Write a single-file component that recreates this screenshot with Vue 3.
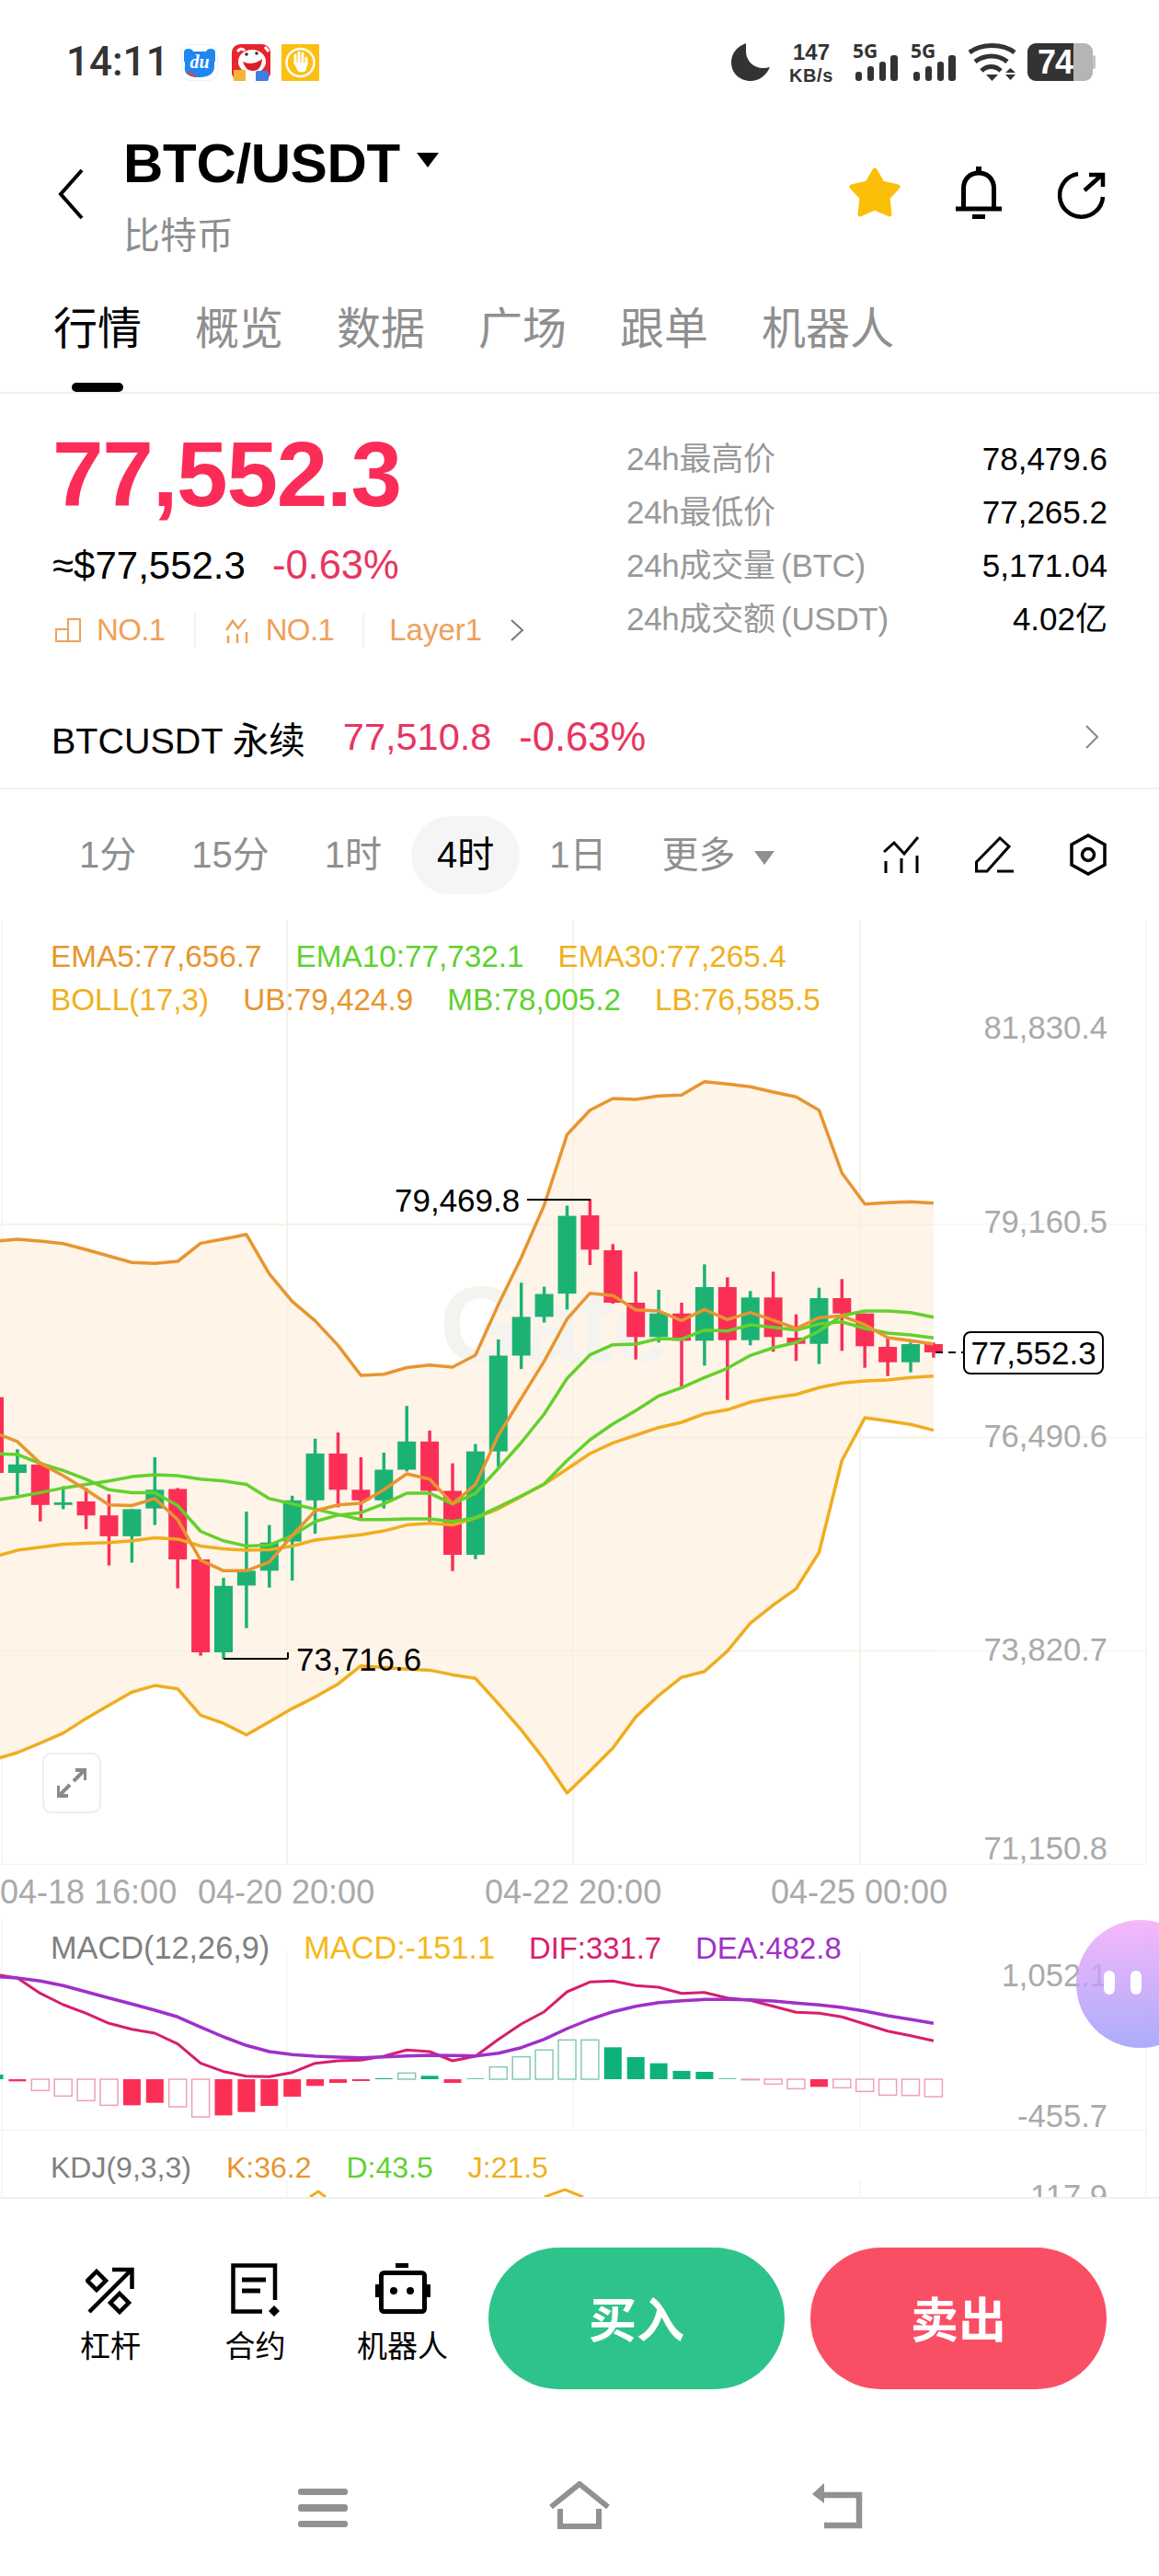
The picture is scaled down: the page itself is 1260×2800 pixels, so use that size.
<script setup>
// page y values per candle index, same spacing for all panels
const step = 24.9
const cx = (i) => -6 + step * i
const pts = (arr) => arr.map((y, i) => cx(i).toFixed(1) + ',' + y).join(' ')

const candles = [
  ['r', 1500, 1518.7, 1601, 1640], ['g', 1575.3, 1591.8, 1601, 1625], ['r', 1588.7, 1591.8, 1635.8, 1653.7],
  ['g', 1615.5, 1633, 1635.8, 1640.4], ['r', 1617.4, 1632, 1647.2, 1662.2], ['r', 1624.3, 1647.2, 1669.8, 1701.6],
  ['g', 1640.4, 1640.4, 1669.8, 1698.5], ['g', 1584, 1619.3, 1639.6, 1657.6], ['r', 1617.4, 1618.5, 1695, 1726.5],
  ['r', 1695, 1695, 1796, 1799.6], ['g', 1715, 1723.8, 1796, 1803.4], ['g', 1643, 1707.3, 1723.4, 1769.7],
  ['g', 1657.6, 1676.7, 1707.3, 1725.7], ['g', 1625.8, 1630.8, 1675.6, 1718], ['g', 1563.8, 1579.9, 1630.8, 1667.1],
  ['r', 1557, 1579.9, 1619.3, 1638.4], ['r', 1584, 1619.3, 1630.8, 1650], ['g', 1579, 1597.5, 1630.8, 1639.6],
  ['g', 1528.2, 1566.9, 1597.5, 1599.4], ['r', 1555, 1566.9, 1620.5, 1653.7], ['r', 1590.6, 1620.5, 1690, 1707.7],
  ['g', 1569.6, 1577.6, 1690, 1694.7], ['g', 1455.9, 1473.5, 1577.6, 1594.4], ['g', 1394.3, 1431.4, 1473.5, 1488],
  ['g', 1398.5, 1406.5, 1431.4, 1437.5], ['g', 1310.5, 1321.6, 1406.1, 1423.4], ['r', 1303.3, 1321, 1358.3, 1375],
  ['r', 1352.3, 1359, 1416, 1417], ['r', 1382.3, 1416, 1453.3, 1477.7], ['g', 1402, 1427.7, 1453.3, 1459.3],
  ['r', 1416, 1427.7, 1457.3, 1510], ['g', 1374.3, 1399, 1457.3, 1484.3], ['r', 1388.3, 1399, 1456.7, 1521.7],
  ['g', 1403.3, 1410.3, 1456.7, 1462.3], ['r', 1382.3, 1410.3, 1453.3, 1469.3], ['r', 1428.7, 1454, 1460.7, 1479.3],
  ['g', 1399.7, 1411, 1460.7, 1482.7], ['r', 1390.3, 1411, 1427.7, 1468.3], ['r', 1427.7, 1427.7, 1463.3, 1486.7],
  ['r', 1453.3, 1464, 1480.7, 1495.7], ['g', 1459.3, 1461, 1480.7, 1491.7], ['r', 1459.3, 1461, 1470, 1475.7],
].map((c, i) => ({ x: cx(i), color: c[0] === 'r' ? '#fb2f56' : '#1cb274', high: c[1], top: c[2], bottom: c[3], low: c[4] }))

const ub = [1349.3, 1347, 1349, 1351.7, 1358.3, 1365.3, 1372.3, 1373.3, 1371, 1351.4, 1346.8, 1341.8, 1384.7, 1414.6, 1435.6, 1462.4, 1495, 1493.8, 1486.5, 1483.8, 1486, 1473, 1418, 1367, 1310, 1233.3, 1206.7, 1194, 1195, 1191.3, 1190.3, 1175.7, 1178.3, 1181.3, 1187, 1192.3, 1206.7, 1275, 1308.7, 1307.3, 1306.3, 1307.7]
const lb = [1912.5, 1905, 1894.6, 1883.9, 1867.9, 1853.6, 1839.3, 1832.1, 1835.7, 1864.3, 1873.2, 1885.7, 1871.4, 1857.1, 1844.6, 1830.4, 1810.7, 1812.5, 1814.3, 1815.4, 1820.4, 1824.3, 1851.8, 1880.4, 1912.5, 1948.9, 1925, 1900, 1866.1, 1842.9, 1823.2, 1816.8, 1794.6, 1764.3, 1744.6, 1726.8, 1687.5, 1587.5, 1541.1, 1544.6, 1548.2, 1554.6]
const mb = [1630.8, 1627, 1622.4, 1617.4, 1613.6, 1609.7, 1605.1, 1602.9, 1604, 1607.8, 1609.7, 1613.6, 1628.9, 1634.6, 1640.4, 1646.1, 1651.8, 1651.8, 1651, 1651, 1653.7, 1649.9, 1638, 1626, 1613, 1587.5, 1565, 1547.7, 1533.3, 1517.3, 1508.3, 1497.3, 1487.3, 1473.3, 1465, 1459.3, 1446.7, 1430, 1425, 1425, 1426.7, 1431.7]
const ema5 = [1557.3, 1566.9, 1590.6, 1604, 1619.3, 1635.8, 1636.5, 1628.9, 1651.8, 1695.8, 1707.3, 1707.3, 1697.8, 1669, 1642.3, 1635.8, 1633.9, 1619.3, 1602, 1607.8, 1634.6, 1613.6, 1560, 1519.8, 1479.6, 1433.7, 1405.7, 1408.3, 1423.7, 1425, 1435.3, 1423.3, 1434.3, 1426.7, 1435, 1444, 1432.3, 1430.3, 1440, 1454, 1457.3, 1461]
const ema10 = [1579.9, 1581, 1590.6, 1598.3, 1607.8, 1619.3, 1622.4, 1622.4, 1636.5, 1664.5, 1674.8, 1680.5, 1679.4, 1669, 1653.7, 1646.9, 1644.2, 1634.6, 1623.1, 1623.1, 1634.6, 1623.1, 1596, 1568, 1537, 1498.3, 1472.7, 1461.7, 1461, 1455, 1455.7, 1445.7, 1446.7, 1440, 1442.7, 1445.7, 1439, 1436.7, 1444, 1449, 1451, 1454.3]
const ema30 = [1692, 1685.1, 1681.7, 1678.6, 1677.5, 1676.7, 1674.8, 1671.4, 1672.9, 1680.5, 1683.6, 1685.1, 1684.4, 1680.5, 1674, 1671, 1668.3, 1664.1, 1657.6, 1655.7, 1657.6, 1649.9, 1640, 1626.7, 1613.3, 1596.7, 1580, 1568.3, 1560, 1551.7, 1546, 1536.7, 1532.3, 1524, 1519.3, 1515.7, 1508.3, 1503.3, 1501, 1500, 1497.3, 1495.7]

const band = pts(ub) + ' ' + lb.map((y, i) => cx(i).toFixed(1) + ',' + y).reverse().join(' ')

// macd panel, values read as offsets from y 2060
const dif = [258, 270, 320, 357, 385, 418, 437, 450, 485, 548, 575, 590, 592, 578, 548, 540, 538, 525, 505, 510, 540, 525, 470, 420, 380, 315, 283, 280, 295, 300, 320, 317, 335, 343, 362, 382, 385, 397, 420, 443, 458, 475].map((v) => +(2060 + v / 3).toFixed(1))
const dea = [265, 270, 280, 295, 315, 335, 355, 375, 397, 430, 462, 490, 510, 520, 525, 528, 530, 527, 524, 522, 523, 524, 515, 497, 470, 435, 405, 380, 362, 350, 344, 340, 340, 341, 345, 352, 358, 366, 378, 393, 405, 418].map((v) => +(2060 + v / 3).toFixed(1))
const hist = [
  ['g', 0, 585, 600], ['r', 0, 600, 607], ['r', 1, 600, 637], ['r', 1, 600, 655], ['r', 1, 600, 670], ['r', 1, 600, 685],
  ['r', 0, 600, 685], ['r', 0, 600, 677], ['r', 1, 600, 690], ['r', 1, 600, 723], ['r', 0, 600, 718], ['r', 0, 600, 707],
  ['r', 0, 600, 687], ['r', 0, 600, 657], ['r', 0, 600, 622], ['r', 0, 600, 612], ['r', 0, 600, 606], ['g', 0, 597, 600],
  ['g', 1, 580, 600], ['g', 0, 589, 600], ['r', 0, 600, 612], ['g', 0, 598, 600], ['g', 1, 560, 600], ['g', 1, 527, 600],
  ['g', 1, 505, 600], ['g', 1, 472, 600], ['g', 1, 472, 600], ['g', 0, 496, 600], ['g', 0, 528, 600], ['g', 0, 548, 600],
  ['g', 0, 573, 600], ['g', 0, 576, 600], ['g', 0, 598, 600], ['r', 1, 600, 602], ['r', 1, 600, 616], ['r', 1, 600, 631],
  ['r', 0, 600, 625], ['r', 1, 600, 628], ['r', 1, 600, 640], ['r', 1, 600, 652], ['r', 1, 600, 653], ['r', 1, 600, 657],
].map((b, i) => ({
  x: cx(i) - 9.5,
  y: 2060 + b[2] / 3,
  h: (b[3] - b[2]) / 3,
  fill: b[1] ? 'none' : b[0] === 'r' ? '#fb2f56' : '#0db27a',
  stroke: b[1] ? (b[0] === 'r' ? '#eda2b2' : '#86c9b4') : 'none',
}))

const tabs = ['行情', '概览', '数据', '广场', '跟单', '机器人']
const stats = [
  ['24h最高价', '78,479.6'],
  ['24h最低价', '77,265.2'],
  ['24h成交量 (BTC)', '5,171.04'],
  ['24h成交额 (USDT)', '4.02亿'],
]
const periods = ['1分', '15分', '1时', '4时', '1日']
const priceAxis = [
  { label: '81,830.4', top: 93 },
  { label: '79,160.5', top: 304 },
  { label: '76,490.6', top: 537 },
  { label: '73,820.7', top: 769 },
  { label: '71,150.8', top: 985 },
]
</script>

<template>
  <main class="page">
    <div class="status">
      <span class="clock">14:11</span>
      <svg class="app du-app" viewBox="0 0 40 40">
        <rect x=".5" y=".5" width="39" height="39" rx="9" fill="#fff" stroke="#eef0f3" />
        <path d="M3 9q0-4 5-4 4 0 5 3h14q1-3 5-3 5 0 5 4v8q0 2-1 3v4q0 12-17 12T4 24v-4q-1-1-1-3z" fill="#1e87f0" />
        <text x="20" y="26" class="du">du</text>
        <path d="M7 30q4 4 9 5" fill="none" stroke="#e8413a" stroke-width="2.500" />
      </svg>
      <svg class="app jd-app" viewBox="0 0 42 40">
        <rect width="42" height="40" rx="9" fill="#e8252e" />
        <path d="M6 8q4-5 8-1M36 3l4 5" stroke="#fff" stroke-width="3" fill="none" />
        <ellipse cx="22" cy="19" rx="15" ry="13" fill="#fff" />
        <path d="M12 19q11 5 21-3-1 13-10 13-8 0-11-10z" fill="#d8202c" />
        <circle cx="16" cy="11" r="1.800" fill="#333" />
        <circle cx="27" cy="10" r="1.800" fill="#333" />
        <rect x="14" y="29" width="12" height="11" fill="#fff" />
        <rect x="2" y="28" width="13" height="12" fill="#f9b233" />
        <rect x="26" y="29" width="14" height="11" rx="2" fill="#3d7fe0" />
      </svg>
      <svg class="app hand-app" viewBox="0 0 41 40">
        <rect width="41" height="40" rx="1" fill="#fcbf12" />
        <circle cx="20.500" cy="20" r="15" fill="none" stroke="#fff" stroke-width="2.500" />
        <path d="M15 21v-9M19 20v-11M23 20v-10M27 22v-7" fill="none" stroke="#fff" stroke-width="3" stroke-linecap="round" />
        <path d="M13.500 20h15l-2 9q-5 3-9 0z" fill="#fff" />
      </svg>
      <svg class="moon" viewBox="0 0 43 41">
        <path d="M16 0C5 4 0 12 0 21c0 11 9 20 21 20 9 0 17-6 21-15-14 4-25-4-26-16 0-4 0-7 0-10z" fill="#333" />
      </svg>
      <div class="speed"><span>147</span><span>KB/s</span></div>
      <svg class="signal first" viewBox="0 -6 50 47">
        <text x="0" y="16" class="five">5G</text>
        <rect x="3" y="31" width="7" height="10" rx="3" fill="#333" />
        <rect x="16" y="25" width="7" height="16" rx="3" fill="#333" />
        <rect x="29" y="20" width="7" height="21" rx="3" fill="#333" />
        <rect x="41" y="13" width="8" height="28" rx="3" fill="#333" />
      </svg>
      <svg class="signal" viewBox="0 -6 50 47">
        <text x="0" y="16" class="five">5G</text>
        <rect x="3" y="31" width="7" height="10" rx="3" fill="#333" />
        <rect x="16" y="25" width="7" height="16" rx="3" fill="#333" />
        <rect x="29" y="20" width="7" height="21" rx="3" fill="#333" />
        <rect x="41" y="13" width="8" height="28" rx="3" fill="#333" />
      </svg>
      <svg class="wifi" viewBox="0 0 52 41">
        <path d="M1 10C14 0 37 0 50 10M7 20c11-8 25-8 35 0M14 30c6-6 15-6 21 0" fill="none" stroke="#333" stroke-width="5" />
        <path d="M19 34h13l-6.500 7zM40 32l5.500-5 5.500 5zM40 34h11l-5.500 6z" fill="#333" />
      </svg>
      <div class="battery"><span class="level">74</span><span class="rest"></span><span class="nub"></span></div>
    </div>

    <header class="head">
      <svg class="back" viewBox="0 0 30 56"><path d="M27 2L4 28l23 26" fill="none" stroke="#000" stroke-width="4" /></svg>
      <div class="title">
        <h1>BTC/USDT <svg class="caret" viewBox="0 0 24 16"><path d="M0 0h24L12 16z" fill="#000" /></svg></h1>
        <p>比特币</p>
      </div>
      <div class="actions">
        <svg class="star" viewBox="0 0 58 56">
          <path d="M29 3l8 14 17 4-11 12 2 18-16-7-16 7 2-18L4 21l17-4z" fill="#fbbf09" stroke="#fbbf09" stroke-width="5" stroke-linejoin="round" />
        </svg>
        <svg class="bell" viewBox="0 0 50 57">
          <rect x="22" y="0" width="6" height="7" fill="#000" />
          <path d="M8.500 46V24C8.500 13 16 7 25 7s16.500 6 16.500 17v22M0 46h50" fill="none" stroke="#000" stroke-width="5" />
          <rect x="18" y="52" width="14" height="5" fill="#000" />
        </svg>
        <svg class="share" viewBox="0 0 53 52">
          <path d="M23 3a23.500 23.500 0 1 0 27 25M30 21L49 4M35 4h15v13" fill="none" stroke="#000" stroke-width="4.500" />
        </svg>
      </div>
    </header>

    <nav class="tabs">
      <div v-for="(t, i) in tabs" :key="t" class="tab" :class="{ on: i === 0 }">
        <span>{{ t }}</span>
        <i v-if="i === 0"></i>
      </div>
    </nav>

    <section class="summary">
      <div class="ticker">
        <div class="left">
          <div class="price">77,552.3</div>
          <div class="sub"><span>≈$77,552.3</span><span class="down pct">-0.63%</span></div>
          <div class="tags">
            <svg width="28" height="26" viewBox="0 0 28 26"><path d="M1 12h13v13H1zM14 1h13v24H14z" fill="none" stroke="#f0a05a" stroke-width="2" /></svg>
            <span class="tag">NO.1</span>
            <b></b>
            <svg width="28" height="28" viewBox="0 0 28 28"><path d="M2 14L9 4l6 8 8-10M4 20v8M14 18v10M24 16v12" fill="none" stroke="#f0a05a" stroke-width="2.500" /></svg>
            <span class="tag">NO.1</span>
            <b></b>
            <span class="tag layer">Layer1</span>
            <svg class="more" width="16" height="26" viewBox="0 0 16 26"><path d="M2 2l12 11L2 24" fill="none" stroke="#777" stroke-width="2" /></svg>
          </div>
        </div>
        <div class="right">
          <div v-for="s in stats" :key="s[0]" class="stat"><span>{{ s[0] }}</span><em>{{ s[1] }}</em></div>
        </div>
      </div>
      <div class="perp">
        <span class="perp-name">BTCUSDT 永续</span>
        <span class="down">77,510.8</span>
        <span class="down pct">-0.63%</span>
        <svg width="16" height="28" viewBox="0 0 16 28"><path d="M2 2l12 12L2 26" fill="none" stroke="#888" stroke-width="2" /></svg>
      </div>
    </section>

    <div class="periods">
      <span v-for="p in periods" :key="p" class="period" :class="{ on: p === '4时' }">{{ p }}</span>
      <span class="period">更多<svg class="tri" viewBox="0 0 22 15"><path d="M0 0h22L11 15z" fill="#8f8f8f" /></svg></span>
      <div class="tools">
        <svg width="40" height="40" viewBox="0 0 40 40">
          <path d="M1 17L12 7l11 12L38 1M3 27v13M20 24v16M37 21v19" fill="none" stroke="#000" stroke-width="3" />
        </svg>
        <svg width="43" height="40" viewBox="0 0 43 40">
          <path d="M1.500 28L27 2l10 9-24 27H1.500zM24 38h18" fill="none" stroke="#000" stroke-width="3" />
        </svg>
        <svg width="40" height="46" viewBox="0 0 40 46">
          <path d="M20 2l18 10v22L20 44 2 34V12z" fill="none" stroke="#000" stroke-width="3.500" />
          <circle cx="20" cy="23" r="6.500" fill="none" stroke="#000" stroke-width="3.500" />
        </svg>
      </div>
    </div>

    <section class="chart">
      <svg class="plot" viewBox="0 1000 1260 1027" width="1260" height="1027">
        <g stroke="#f6f5f4" stroke-width="1.500">
          <path d="M2 1000v1027M312 1000v1027M623 1000v1027M935 1000v1027M1246 1000v1027" />
          <path d="M0 1330.700h1246M0 1562.500h1246M0 1794.600h1246M0 2026.500h1246" />
        </g>
        <polygon :points="band" fill="#fef4e8" />
        <path d="M312 1000v1027M623 1000v1027M935 1000v1027M0 1330.700h1016M0 1562.500h1016M0 1794.600h1016" stroke="#f8efe4" stroke-width="1.500" />
        <text x="478" y="1480" class="mark">Gate</text>
        <polyline :points="pts(ub)" class="ln" stroke="#e8952f" stroke-width="3.500" />
        <polyline :points="pts(lb)" class="ln" stroke="#f0ad1e" stroke-width="3.500" />
        <g v-for="c in candles" :key="c.x">
          <line :x1="c.x" :x2="c.x" :y1="c.high" :y2="c.low" :stroke="c.color" stroke-width="3.500" />
          <rect :x="c.x - 10" :y="c.top" width="20" :height="c.bottom - c.top" :fill="c.color" />
        </g>
        <polyline :points="pts(ema30)" class="ln" stroke="#f0ad1e" stroke-width="3.500" />
        <polyline :points="pts(mb)" class="ln" stroke="#63d12c" stroke-width="3.500" />
        <polyline :points="pts(ema10)" class="ln" stroke="#63d12c" stroke-width="3.500" />
        <polyline :points="pts(ema5)" class="ln" stroke="#e8952f" stroke-width="3.500" />
        <path d="M573 1304h69M243 1803h70M313 1803v-7" fill="none" stroke="#000" stroke-width="2" />
        <path d="M1017 1470h30" fill="none" stroke="#000" stroke-width="2" stroke-dasharray="8 6" />
      </svg>

      <div class="legend main-legend">
        <div>
          <span class="orange">EMA5:77,656.7</span>
          <span class="green">EMA10:77,732.1</span>
          <span class="gold">EMA30:77,265.4</span>
        </div>
        <div>
          <span class="gold">BOLL(17,3)</span>
          <span class="orange">UB:79,424.9</span>
          <span class="green">MB:78,005.2</span>
          <span class="gold">LB:76,585.5</span>
        </div>
      </div>
      <span v-for="a in priceAxis" :key="a.label" class="axis" :style="{ top: a.top + 'px' }">{{ a.label }}</span>
      <span class="peak hi">79,469.8</span>
      <span class="peak lo">73,716.6</span>
      <span class="last">77,552.3</span>
      <button class="expand">
        <svg width="32" height="32" viewBox="0 0 32 32">
          <path d="M18 14L30 2M20 2h11v11M14 18L2 30M12 30H1V19" fill="none" stroke="#8a8a8a" stroke-width="4" />
        </svg>
      </button>
    </section>

    <div class="xaxis">
      <span>04-18 16:00</span>
      <span>04-20 20:00</span>
      <span>04-22 20:00</span>
      <span>04-25 00:00</span>
    </div>

    <section class="macd">
      <svg class="plot" viewBox="0 2085 1260 231" width="1260" height="231">
        <path d="M2 2085v231M312 2120v196M623 2120v196M935 2120v196M1246 2085v231M0 2315.500h1246" stroke="#f6f5f4" stroke-width="1.500" fill="none" />
        <rect v-for="b in hist" :key="b.x" :x="b.x" :y="b.y" width="19" :height="b.h" :fill="b.fill" :stroke="b.stroke" stroke-width="1.500" />
        <polyline :points="pts(dif)" class="ln" stroke="#d81e6e" stroke-width="3" />
        <polyline :points="pts(dea)" class="ln" stroke="#a030c8" stroke-width="3.500" />
      </svg>
      <div class="legend sub-legend">
        <div>
          <span class="grey">MACD(12,26,9)</span>
          <span class="yellow">MACD:-151.1</span>
          <span class="pink">DIF:331.7</span>
          <span class="purple">DEA:482.8</span>
        </div>
      </div>
      <span class="axis" style="top: 38px">1,052.1</span>
      <span class="axis" style="top: 191px">-455.7</span>
    </section>

    <section class="kdj">
      <svg class="plot" viewBox="0 2316 1260 72" width="1260" height="72">
        <path d="M2 2316v72M312 2370v18M623 2370v18M935 2370v18M1246 2316v72" stroke="#f6f5f4" stroke-width="1.500" fill="none" />
        <path d="M337 2388l9-6 8 6M592 2388l22-8 20 8" fill="none" stroke="#f0ad1e" stroke-width="3" />
      </svg>
      <div class="legend kdj-legend">
        <div>
          <span class="grey">KDJ(9,3,3)</span>
          <span class="orange">K:36.2</span>
          <span class="green">D:43.5</span>
          <span class="gold">J:21.5</span>
        </div>
      </div>
      <span class="axis" style="top: 47px">117.9</span>
    </section>

    <div class="bubble"><i></i><i></i></div>

    <footer class="bottom">
      <div class="trade">
        <div class="tool-item">
          <svg width="54" height="54" viewBox="0 0 54 54">
            <path d="M4 50L50 4M29 4h21.500v21M12 6l10 10-10 10L2 16zM37 30l10 10-10 10-10-10z" fill="none" stroke="#000" stroke-width="4.500" />
          </svg>
          <span>杠杆</span>
        </div>
        <div class="tool-item">
          <svg width="54" height="58" viewBox="0 0 54 58">
            <path d="M48 40V2.500H2.500v50H34" fill="none" stroke="#000" stroke-width="4.500" />
            <path d="M12 18h26M12 30h20" stroke="#000" stroke-width="5" />
            <path d="M47 46l6 6-6 6-6-6z" fill="#000" />
          </svg>
          <span>合约</span>
        </div>
        <div class="tool-item">
          <svg width="60" height="55" viewBox="0 0 60 55">
            <rect x="6.500" y="10.500" width="47" height="42" rx="3" fill="none" stroke="#000" stroke-width="5" />
            <rect x="22" y="0" width="14" height="5" fill="#000" />
            <rect x="0" y="23" width="5" height="14" fill="#000" />
            <rect x="55" y="23" width="5" height="14" fill="#000" />
            <circle cx="20" cy="30" r="4" fill="#000" />
            <circle cx="38" cy="30" r="4" fill="#000" />
          </svg>
          <span>机器人</span>
        </div>
        <button class="btn buy">买入</button>
        <button class="btn sell">卖出</button>
      </div>
      <div class="sysnav">
        <svg width="54" height="44" viewBox="0 0 54 44">
          <rect width="54" height="7" rx="3" y="0" fill="#919191" />
          <rect width="54" height="8" rx="3" y="17" fill="#919191" />
          <rect width="54" height="7" rx="3" y="35" fill="#919191" />
        </svg>
        <svg width="68" height="52" viewBox="0 0 68 52">
          <path d="M3 28L34 3l31 25M13 30v19h42V30" fill="none" stroke="#919191" stroke-width="6" />
        </svg>
        <svg width="58" height="50" viewBox="0 0 58 50">
          <path d="M12 13h40v33H14" fill="none" stroke="#919191" stroke-width="6.500" />
          <path d="M14 0v22L1 12z" fill="#919191" />
        </svg>
      </div>
    </footer>
  </main>
</template>

<style scoped>
.page {
  position: relative;
  width: 1260px;
  height: 2800px;
  overflow: hidden;
  background: #fff;
  font-family: "Liberation Sans", "Noto Sans CJK SC", sans-serif;
  color: #000;
}
.status {
  height: 136px;
  padding: 47px 0 0 72px;
  box-sizing: border-box;
  display: flex;
  align-items: flex-start;
}
.clock {
  font-family: Roboto, sans-serif;
  font-size: 44px;
  line-height: 41px;
  font-weight: 500;
  color: #333;
  width: 125px;
}
.app { height: 40px; margin-top: 1px; }
.du-app { width: 40px; }
.jd-app { width: 42px; margin-left: 15px; }
.hand-app { width: 41px; margin-left: 12px; }
.du { font: italic 700 20px "Liberation Serif", serif; fill: #fff; text-anchor: middle; }
.moon { width: 43px; height: 41px; margin-left: 448px; }
.speed {
  width: 50px;
  margin: -4px 0 0 19px;
  display: flex;
  flex-direction: column;
  align-items: center;
  gap: 2px;
  font-weight: 700;
  color: #333;
}
.speed span:first-child { font-size: 24px; line-height: 27px; }
.speed span:last-child { font-size: 20px; line-height: 20px; letter-spacing: .6px; }
.signal { width: 50px; height: 47px; margin: -6px 0 0 13px; }
.signal.first { margin-left: 20px; }
.five { font-family: "Noto Sans", sans-serif; font-size: 21px; font-weight: 700; fill: #333; }
.wifi { width: 52px; height: 41px; margin-left: 13px; }
.battery { height: 41px; margin-left: 12px; display: flex; align-items: center; }
.level {
  width: 50px;
  height: 41px;
  padding-right: 1px;
  box-sizing: border-box;
  background: #333;
  border-radius: 9px 0 0 9px;
  color: #fff;
  font-size: 36px;
  font-weight: 700;
  letter-spacing: -1px;
  line-height: 41px;
  text-align: right;
}
.rest { width: 21px; height: 41px; background: #b5b5b5; border-radius: 0 9px 9px 0; }
.nub { width: 3px; height: 15px; background: #c4c4c4; border-radius: 0 2px 2px 0; }

.head {
  height: 164px;
  padding: 0 58px 0 62px;
  display: flex;
  align-items: flex-start;
}
.back { width: 30px; height: 56px; margin: 47px 42px 0 0; }
.title { padding-top: 12px; }
.title h1 {
  margin: 0;
  font-size: 60px;
  line-height: 60px;
  font-weight: 700;
  letter-spacing: -.3px;
  white-space: nowrap;
}
.caret { width: 24px; height: 16px; margin-left: 2px; vertical-align: 16px; }
.title p { margin: 26px 0 0; font-size: 40px; line-height: 44px; color: #8d8d8d; }
.actions { margin-left: auto; padding-top: 45px; display: flex; align-items: flex-start; }
.star { width: 58px; height: 56px; margin-top: 1px; }
.bell { width: 50px; height: 57px; margin-left: 59px; }
.share { width: 53px; height: 52px; margin: 5px 0 0 60px; }

.tabs {
  height: 128px;
  box-sizing: border-box;
  padding: 30px 0 0 58px;
  display: flex;
  gap: 58px;
  border-bottom: 2px solid #f1f1f1;
  font-size: 48px;
  line-height: 56px;
  color: #8f8f8f;
}
.tab { display: flex; flex-direction: column; align-items: center; }
.tab.on { color: #000; }
.tab i { width: 56px; height: 11px; margin-top: 30px; border-radius: 6px; background: #000; }

.summary { height: 430px; border-bottom: 2px solid #f1f1f1; box-sizing: border-box; }
.ticker { display: flex; justify-content: space-between; padding: 0 56px 0 57px; height: 333px; }
.left { padding-top: 37px; }
.price {
  font-size: 100px;
  line-height: 100px;
  font-weight: 700;
  color: #fb2c58;
  letter-spacing: -1.300px;
}
.sub { margin-top: 24px; display: flex; align-items: baseline; gap: 29px; font-size: 42px; line-height: 50px; }
.down { color: #e8355f; }
.pct { font-size: 43.500px; }
.tags { margin: 25px 0 0 3px; height: 40px; display: flex; align-items: center; color: #f0a05a; }
.tag { font-size: 33px; letter-spacing: -.6px; margin-left: 17px; }
.tags b { width: 2px; height: 36px; background: #f5f0ea; margin: 0 31px; }
.tags b + .layer { margin-left: -4px; letter-spacing: 0; }
.more { margin-left: 30px; }
.right { width: 523px; padding-top: 42px; }
.stat {
  display: flex;
  justify-content: space-between;
  height: 58px;
  line-height: 58px;
  font-size: 35px;
  color: #999;
  word-spacing: -3px;
}
.stat span { letter-spacing: -.3px; }
.stat em { font-style: normal; color: #000; }
.perp {
  height: 80px;
  padding: 0 65px 0 56px;
  display: flex;
  align-items: center;
  font-size: 41.500px;
  gap: 30px;
}
.perp-name { font-size: 39.500px; margin-right: 11px; }
.perp svg { margin-left: auto; }

.periods {
  height: 142px;
  padding: 0 57px 0 58px;
  box-sizing: border-box;
  display: flex;
  align-items: center;
  gap: 4px;
  font-size: 40px;
  color: #8f8f8f;
}
.period {
  height: 85px;
  line-height: 85px;
  padding: 0 28px;
  border-radius: 43px;
  white-space: nowrap;
}
.period.on { background: #f5f5f5; color: #000; }
.tri { width: 22px; height: 15px; margin-left: 20px; vertical-align: 3px; }
.tools { margin-left: auto; display: flex; align-items: center; gap: 60px; }

.chart { position: relative; height: 1027px; }
.macd { position: relative; height: 231px; }
.kdj { position: relative; height: 72px; overflow: hidden; }
.plot { display: block; }
.ln { fill: none; stroke-linejoin: round; }
.mark { font-size: 116px; font-weight: 700; fill: #f5f3f0; letter-spacing: -2px; }
.legend {
  position: absolute;
  left: 55px;
  top: 16px;
  font-size: 34.300px;
  line-height: 47px;
  white-space: nowrap;
}
.legend div { display: flex; gap: 37px; }
.main-legend { font-size: 33.300px; }
.sub-legend { top: 9px; }
.kdj-legend { top: 17px; font-size: 32px; }
.kdj-legend div { gap: 38px; }
.orange { color: #e8952f; }
.green { color: #5fd130; }
.gold { color: #f0b020; }
.grey { color: #808080; }
.yellow { color: #f5b91a; }
.pink { color: #d81e6e; font-size: 32.800px; }
.purple { color: #a030c8; font-size: 32.800px; }
.axis {
  position: absolute;
  right: 56px;
  font-size: 34.600px;
  line-height: 48px;
  color: #aaa;
}
.peak { position: absolute; font-size: 35px; line-height: 40px; color: #000; }
.hi { left: 429px; top: 285px; }
.lo { left: 322px; top: 784px; }
.last {
  position: absolute;
  left: 1047px;
  top: 447px;
  width: 153px;
  height: 47px;
  box-sizing: border-box;
  border: 2px solid #000;
  border-radius: 8px;
  background: #fff;
  font-size: 35px;
  line-height: 44px;
  text-align: center;
}
.expand {
  position: absolute;
  left: 46px;
  top: 905px;
  width: 64px;
  height: 66px;
  padding: 0;
  border: 2px solid #eeeeee;
  border-radius: 10px;
  background: #fff;
  display: flex;
  align-items: center;
  justify-content: center;
}
.xaxis {
  height: 58px;
  display: grid;
  grid-template-columns: 215px 312px 311px 311px;
  font-size: 36px;
  line-height: 60px;
  color: #aaa;
  white-space: nowrap;
}
.bubble {
  position: absolute;
  left: 1170px;
  top: 2087px;
  width: 140px;
  height: 139px;
  border-radius: 50%;
  background: linear-gradient(180deg, rgba(244, 165, 250, .8), rgba(150, 152, 250, .8));
  display: flex;
  gap: 17px;
  padding: 55px 0 0 30px;
  box-sizing: border-box;
}
.bubble i { width: 12px; height: 26px; border-radius: 6px; background: #fff; }

.bottom { border-top: 2px solid #f0f0f0; height: 412px; box-sizing: border-box; }
.trade { height: 243px; padding: 53px 56px 0 0; display: flex; align-items: flex-start; box-sizing: border-box; }
.tool-item {
  width: 157px;
  height: 112px;
  margin-top: 17px;
  display: flex;
  flex-direction: column;
  align-items: center;
  justify-content: space-between;
  font-size: 33px;
  line-height: 42px;
}
.tool-item:first-child { margin-left: 41px; width: 158px; }
.tool-item:first-child svg { margin-top: 3px; }
.tool-item:nth-child(3) { margin-right: 15px; margin-left: 3px; }
.btn {
  width: 322px;
  height: 154px;
  padding: 0 0 4px;
  border: 0;
  border-radius: 77px;
  color: #fff;
  font: 700 52px "Liberation Sans", "Noto Sans CJK SC", sans-serif;
}
.buy { background: #2ec38a; }
.sell { background: #f94f65; margin-left: 28px; }
.sysnav {
  padding: 65px 320px 0 324px;
  display: flex;
  justify-content: space-between;
  align-items: flex-end;
  height: 116px;
  box-sizing: border-box;
}
</style>

<style>
html, body { margin: 0; background: #fff; }
</style>
